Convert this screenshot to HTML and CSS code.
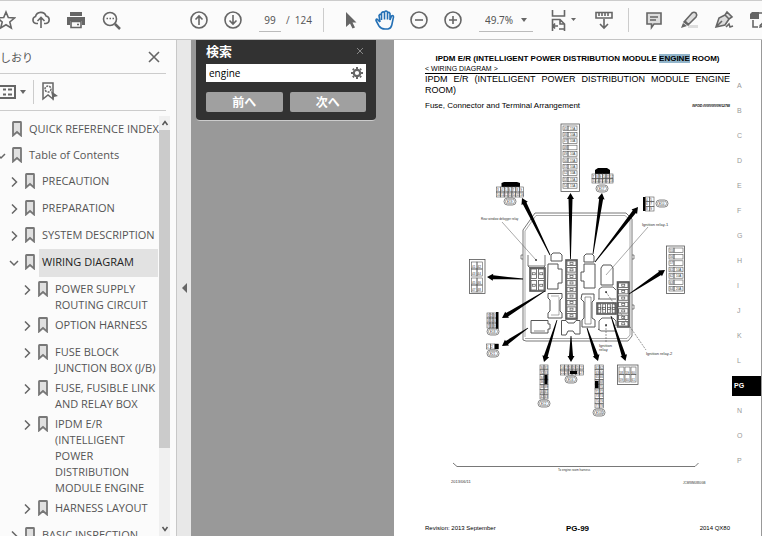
FILE: index.html
```
<!DOCTYPE html>
<html lang="ja">
<head>
    <meta charset="UTF-8">
    <meta name="viewport" content="width=device-width, initial-scale=1.0">
    <title>PG-99</title>
    <link rel="stylesheet" href="styles.css">
</head>
<body>
    <!-- shared symbols -->
    <svg class="symbols" aria-hidden="true">
        <symbol id="bookmark" viewBox="0 0 10 16"><path d="M1 1.5Q1 1 1.5 1H8.500Q9 1 9 1.500V14.500L5 11L1 14.500Z" fill="#e0e0e0" stroke="#777" stroke-width="1.800"/></symbol>
        <symbol id="right" viewBox="0 0 10 10"><path d="M3 0.500L7.500 5L3 9.500" fill="none" stroke="#666" stroke-width="1.500"/></symbol>
        <symbol id="down" viewBox="0 0 10 10"><path d="M1 3L5 7L9 3" fill="none" stroke="#666" stroke-width="1.500"/></symbol>
    </svg>

    <header class="toolbar">
        <div class="group first">
            <button aria-label="Star"><svg width="20" height="20" viewBox="0 0 20 20"><path d="M10 2L12.300 7.500L18.500 8L13.800 12L15.300 18L10 14.800L4.700 18L6.200 12L1.500 8L7.700 7.500Z"/></svg></button>
            <button aria-label="Upload"><svg width="20" height="20" viewBox="0 0 20 20"><path d="M7 13.500H5A3.600 3.600 0 0 1 4.500 6.500A5.500 5.500 0 0 1 15 6A3.800 3.800 0 0 1 15 13.500H13M10 18V8M6.500 11L10 7.500L13.500 11"/></svg></button>
            <button aria-label="Print"><svg width="20" height="20" viewBox="0 0 20 20"><path class="solid" d="M4 2H16V6H4ZM1 7H19V15H16V11H4V15H1Z"/><path d="M5 11.500H15V17.500H5ZM11 14.500H13"/></svg></button>
            <button aria-label="Find"><svg width="20" height="20" viewBox="0 0 20 20"><circle cx="9" cy="9" r="6.500"/><path d="M14 14L19 19" stroke-width="2.500"/><path d="M5.500 8.500H13" stroke-dasharray="1.500 1.500"/></svg></button>
        </div>
        <div class="group paging">
            <button aria-label="Previous page"><svg width="20" height="20" viewBox="0 0 20 20"><circle cx="10" cy="10" r="8"/><path d="M10 15V6M6.500 9.500L10 6L13.500 9.500"/></svg></button>
            <button aria-label="Next page"><svg width="20" height="20" viewBox="0 0 20 20"><circle cx="10" cy="10" r="8"/><path d="M10 5V14M6.500 10.500L10 14L13.500 10.500"/></svg></button>
        </div>
        <input class="page-no" aria-label="Page" value="99">
        <span class="page-count">/&nbsp; 124</span>
        <div class="group tools">
            <button aria-label="Select"><svg width="20" height="20" viewBox="0 0 20 20"><path class="solid" d="M5 2L15.500 12.500H11.500L14 17.500L11.500 18.500L9 13.500L5 17Z"/></svg></button>
            <button class="active" aria-label="Hand"><svg width="20" height="20" viewBox="0 0 20 20"><path d="M5 12L2.500 9.500Q1 8.500 1 10.500L4 16Q6 19 10 19H13Q16 18.500 16.800 15L18.500 7Q18.500 5 16.500 6L15 10V3.500Q14 1.500 12.500 3V9.500V2Q11 0 9.500 2V9.500V2.500Q8 1 6.500 3V10V5Q5 3.500 4 5.500L5 12"/></svg></button>
            <button aria-label="Zoom out"><svg width="20" height="20" viewBox="0 0 20 20"><circle cx="10" cy="10" r="8"/><path d="M6 10H14"/></svg></button>
            <button aria-label="Zoom in"><svg width="20" height="20" viewBox="0 0 20 20"><circle cx="10" cy="10" r="8"/><path d="M6 10H14M10 6V14"/></svg></button>
        </div>
        <div class="zoom">
            <select aria-label="Zoom"><option>49.7%</option></select>
            <svg class="caret" width="6" height="4" viewBox="0 0 6 4"><path d="M0 0H6L3 4Z"/></svg>
        </div>
        <div class="group fit">
            <button aria-label="Fit page"><svg width="26" height="22" viewBox="0 0 26 22"><path d="M1.500 1V7H13.500V1M1.500 22V10.500H9L13.500 15V22M9 10.500V15H13.500M7 17H2M4 14.500L2 17L4 19.500M8 20H13"/><path class="solid" d="M20 9H25L22.500 12Z"/></svg></button>
            <button aria-label="Measure"><svg width="20" height="20" viewBox="0 0 20 20"><path d="M2 2.500H18V8H2ZM5 3V6M8 3V6M11 3V6M14 3V6M10 9V18M6 14L10 18L14 14"/></svg></button>
        </div>
        <div class="group last">
            <button aria-label="Comment"><svg width="20" height="20" viewBox="0 0 20 20"><path class="tint" d="M3 3H17V14H10L7.500 17.500V14H3Z"/><path d="M6 7H14M6 10H12"/></svg></button>
            <button aria-label="Highlight"><svg width="20" height="20" viewBox="0 0 20 20"><path d="M9 16.500H19" stroke="#ddd" stroke-width="3"/><path class="tint" d="M5 12L13 3Q15 1.500 17 3Q18.500 5 17 7L9 15ZM6 11L10 15"/><path class="solid" d="M4 13L8 16L2 18Z"/></svg></button>
            <button aria-label="Sign"><svg width="20" height="20" viewBox="0 0 20 20"><path class="tint" d="M2 17L5 8L11 5L15 9L11 15ZM11 5L13 2L18 7L15 9M2 17L8 11"/><path d="M12 17L15 14L16 17L19 16"/></svg></button>
            <button aria-label="More"><svg width="20" height="20" viewBox="0 0 20 20"><path d="M4 10V17H9M6 3H14V8M11 16L17 9"/><path class="solid" d="M1 4L3 2H10V9H1ZM10 18L11 14L14 17Z"/></svg></button>
        </div>
    </header>

    <main class="viewer">
        <aside class="sidebar">
            <div class="side-title">
                <h2>しおり</h2>
                <button aria-label="Close"><svg width="12" height="12" viewBox="0 0 12 12"><path d="M1 1L11 11M11 1L1 11"/></svg></button>
            </div>
            <div class="side-tools">
                <button aria-label="Options"><svg width="26" height="16" viewBox="0 0 26 16"><path d="M0 2H15V14H0M3 5.500H6M3 10.500H6M8 5.500H12M8 10.500H12" stroke-width="2"/><path class="solid" d="M20 6H26L23 10Z"/></svg></button>
                <button class="find-mark" aria-label="Find bookmark"><svg width="17" height="20" viewBox="0 0 17 20"><path d="M1 1H11V17L6 13L1 17Z"/><circle cx="6" cy="7" r="3" stroke-dasharray="2 1"/><path class="solid" d="M9 9L16 14L12 15L11 19Z"/></svg></button>
            </div>
            <div class="tree-wrap">
                <ul class="tree">
                    <li><div class="row"><span class="tw"></span><svg class="bm"><use href="#bookmark"/></svg><a href="#">QUICK REFERENCE INDEX</a></div></li>
                    <li><div class="row"><svg class="tw"><use href="#down"/></svg><svg class="bm"><use href="#bookmark"/></svg><a href="#">Table of Contents</a></div>
                        <ul>
                            <li><div class="row"><svg class="tw"><use href="#right"/></svg><svg class="bm"><use href="#bookmark"/></svg><a href="#">PRECAUTION</a></div></li>
                            <li><div class="row"><svg class="tw"><use href="#right"/></svg><svg class="bm"><use href="#bookmark"/></svg><a href="#">PREPARATION</a></div></li>
                            <li><div class="row"><svg class="tw"><use href="#right"/></svg><svg class="bm"><use href="#bookmark"/></svg><a href="#">SYSTEM DESCRIPTION</a></div></li>
                            <li><div class="row"><svg class="tw"><use href="#down"/></svg><svg class="bm"><use href="#bookmark"/></svg><a class="current" href="#">WIRING DIAGRAM</a></div>
                                <ul>
                                    <li><div class="row"><svg class="tw"><use href="#right"/></svg><svg class="bm"><use href="#bookmark"/></svg><a href="#">POWER SUPPLY<br>ROUTING CIRCUIT</a></div></li>
                                    <li><div class="row"><svg class="tw"><use href="#right"/></svg><svg class="bm"><use href="#bookmark"/></svg><a href="#">OPTION HARNESS</a></div></li>
                                    <li><div class="row"><svg class="tw"><use href="#right"/></svg><svg class="bm"><use href="#bookmark"/></svg><a href="#">FUSE BLOCK<br>JUNCTION BOX (J/B)</a></div></li>
                                    <li><div class="row"><svg class="tw"><use href="#right"/></svg><svg class="bm"><use href="#bookmark"/></svg><a href="#">FUSE, FUSIBLE LINK<br>AND RELAY BOX</a></div></li>
                                    <li><div class="row"><svg class="tw"><use href="#right"/></svg><svg class="bm"><use href="#bookmark"/></svg><a href="#">IPDM E/R<br>(INTELLIGENT<br>POWER<br>DISTRIBUTION<br>MODULE ENGINE</a></div></li>
                                    <li><div class="row"><svg class="tw"><use href="#right"/></svg><svg class="bm"><use href="#bookmark"/></svg><a href="#">HARNESS LAYOUT</a></div></li>
                                </ul>
                            </li>
                            <li><div class="row"><svg class="tw"><use href="#right"/></svg><svg class="bm"><use href="#bookmark"/></svg><a href="#">BASIC INSPECTION</a></div></li>
                        </ul>
                    </li>
                </ul>
                <div class="scrollbar">
                    <button aria-label="Scroll up"><svg width="8" height="6" viewBox="0 0 8 6"><path d="M1.500 5L4 1.500L6.500 5"/></svg></button>
                    <div class="track"><div class="thumb"></div></div>
                    <button aria-label="Scroll down"><svg width="8" height="6" viewBox="0 0 8 6"><path d="M1.500 1L4 4.500L6.500 1"/></svg></button>
                </div>
            </div>
        </aside>
        <button class="splitter" aria-label="Hide panel"><svg width="5" height="10" viewBox="0 0 5 10"><path d="M5 0V10L0 5Z"/></svg></button>

        <section class="canvas">
            <form class="search">
                <div class="search-head">
                    <label for="q">検索</label>
                    <button type="button" class="close" aria-label="Close search"><svg width="8" height="8" viewBox="0 0 8 8"><path d="M1 1L7 7M7 1L1 7"/></svg></button>
                </div>
                <div class="search-box">
                    <input id="q" value="engine">
                    <svg width="12" height="12" viewBox="0 0 12 12"><circle cx="6" cy="6" r="3.200" fill="none" stroke="#666" stroke-width="2.200"/><path d="M6 0V2M6 10V12M0 6H2M10 6H12M1.800 1.800L3 3M9 9L10.200 10.200M1.800 10.200L3 9M9 3L10.200 1.800" stroke="#666" stroke-width="2"/></svg>
                </div>
                <div class="search-nav">
                    <button type="button">前へ</button>
                    <button type="button">次へ</button>
                </div>
            </form>

            <article class="page">
                <div class="content">
                    <h1>IPDM E/R (INTELLIGENT POWER DISTRIBUTION MODULE <mark>ENGINE</mark> ROOM)</h1>
                    <p class="section">&lt; WIRING DIAGRAM &gt;</p>
                    <h3>IPDM E/R (INTELLIGENT POWER DISTRIBUTION MODULE ENGINE ROOM)</h3>
                    <div class="sub"><h4>Fuse, Connector and Terminal Arrangement</h4><span>INFOID:0000000009012788</span></div>
                    <svg id="diagram" viewBox="425 115 305 375"></svg>
                    <footer><span>Revision: 2013 September</span><b>PG-99</b><span class="model">2014 QX80</span></footer>
                </div>
                <ol class="index">
                    <li>A</li><li>B</li><li>C</li><li>D</li><li>E</li><li>F</li><li>G</li><li>H</li>
                    <li>I</li><li>J</li><li>K</li><li>L</li><li class="on">PG</li><li>N</li><li>O</li><li>P</li>
                </ol>
            </article>
        </section>
    </main>
    <script src="diagram.js"></script>
</body>
</html>
```
FILE: styles.css
```
* {
    box-sizing: border-box;
}
body {
    display: flex;
    flex-direction: column;
    height: 100vh;
    margin: 0;
    overflow: hidden;
    background: #fbfbfb;
    color: #555;
    font-family: "Open Sans", "Noto Sans CJK JP", sans-serif;
    font-size: 12px;
}
button {
    display: flex;
    align-items: center;
    justify-content: center;
    padding: 0;
    border: 0;
    background: none;
    font-family: inherit;
}
svg {
    flex: none;
}
ul, ol {
    margin: 0;
    padding: 0;
    list-style: none;
}
h1, h2, h3, h4, p {
    margin: 0;
    font-weight: normal;
}
.symbols {
    display: none;
}

/* toolbar */
.toolbar {
    display: flex;
    flex: none;
    align-items: center;
    height: 40px;
    border-top: 1px solid #ccc;
    border-bottom: 1px solid #c4c4c4;
    overflow: hidden;
}
.toolbar > * {
    flex: none;
}
.group {
    display: flex;
}
.group button {
    width: 34px;
    height: 24px;
}
.group svg, .side-title svg, .side-tools svg {
    fill: none;
    stroke: #666;
    stroke-width: 1.6;
}
.group .solid, .side-tools .solid {
    fill: #666;
    stroke: none;
}
.group .tint {
    fill: #ddd;
}
.group .active svg {
    stroke: #2470b5;
}
.first {
    margin-left: -12px;
}
.first button, .last button {
    width: 35px;
}
.paging {
    margin-left: 54px;
}
.page-no {
    width: 22px;
    height: 24px;
    margin-left: 9px;
    padding: 0;
    border: 0;
    border-bottom: 1px solid #bbb;
    background: none;
    color: #555;
    font: 10px "Noto Sans", sans-serif;
    text-align: center;
}
.page-count {
    width: 37px;
    margin-left: 5px;
    font-size: 10px;
}
.tools {
    padding-left: 10px;
    border-left: 1px solid #ccc;
}
.zoom {
    display: flex;
    align-items: center;
    width: 54px;
    height: 24px;
    margin-left: 9px;
    border-bottom: 1px solid #bbb;
}
.zoom select {
    flex: 1;
    padding: 0 0 0 6px;
    border: 0;
    background: none;
    color: #555;
    font: 10px "Noto Sans", sans-serif;
    appearance: none;
}
.caret {
    margin-right: 6px;
    fill: #666;
}
.fit {
    gap: 6px;
    width: 82px;
    margin-left: 14px;
    border-right: 1px solid #ccc;
}
.last {
    margin-left: 7px;
}

/* bookmarks panel */
.viewer {
    display: flex;
    flex: 1;
    min-height: 0;
}
.sidebar {
    display: flex;
    flex: none;
    flex-direction: column;
    width: 177px;
    border-right: 1px solid #c8c8c8;
}
.side-title {
    display: flex;
    flex: none;
    align-items: center;
    justify-content: space-between;
    height: 34px;
    margin-right: 10px;
    padding-right: 6px;
    border-bottom: 1px solid #ccc;
}
.side-title h2 {
    font: 11px "Noto Sans CJK JP", sans-serif;
}
.side-tools {
    display: flex;
    flex: none;
    align-items: center;
    height: 37px;
    margin-right: 10px;
    border-bottom: 1px solid #ccc;
}
.side-tools svg {
    stroke-width: 1.5;
}
.find-mark {
    height: 24px;
    margin-left: 7px;
    padding-left: 8px;
    border-left: 1px solid #ccc;
}
.tree-wrap {
    display: flex;
    flex: 1;
    min-height: 0;
    padding: 5px 6px 0 0;
}
.tree {
    flex: 1;
    padding-top: 5px;
    overflow: hidden;
    white-space: nowrap;
}
.row {
    display: flex;
    min-height: 26px;
    margin-left: -4px;
    padding-bottom: 4px;
}
.tree ul {
    padding-left: 13px;
}
.tree ul .row {
    min-height: 27px;
}
.tw {
    flex: none;
    width: 10px;
    height: 10px;
    margin: 4px 6px 0 0;
}
.bm {
    width: 10px;
    height: 16px;
}
.row a {
    flex: 1;
    margin-left: 4px;
    padding-left: 3px;
    color: #555;
    font-size: 11px;
    line-height: 16px;
    text-decoration: none;
}
.row .current {
    margin: -5px 1px 0 4px;
    padding-top: 5px;
    background: #e2e2e2;
    color: #222;
}
.scrollbar {
    display: flex;
    flex: none;
    flex-direction: column;
    width: 11px;
    background: #f0f0f0;
}
.scrollbar button {
    height: 14px;
}
.scrollbar svg {
    fill: none;
    stroke: #555;
    stroke-width: 1.5;
}
.track {
    flex: 1;
}
.thumb {
    height: 81%;
    background: #cbcbcb;
}
.splitter {
    flex: none;
    width: 14px;
    background: #e8e8e8;
    fill: #666;
}

/* document */
.canvas {
    display: flex;
    flex: 1;
    align-items: flex-start;
    min-width: 0;
    padding: 0 1px 0 5px;
    background: #999;
}
.search {
    flex: none;
    width: 180px;
    margin-right: 18px;
    padding: 0 10px 8px;
    border-bottom: 1px solid #ccc;
    border-radius: 0 0 4px 4px;
    background: #323232;
    color: #fff;
}
.search-head {
    display: flex;
    align-items: center;
    justify-content: space-between;
    height: 24px;
    padding: 0 2px 3px 0;
    font-size: 13px;
    font-weight: bold;
}
.search-head svg {
    stroke: #888;
}
.search-box {
    display: flex;
    align-items: center;
    height: 18px;
    padding: 0 3px;
    background: #fff;
}
.search-box input {
    flex: 1;
    min-width: 0;
    padding: 0;
    border: 0;
    color: #000;
    font: 10px "Open Sans", sans-serif;
}
.search-nav {
    display: flex;
    gap: 7px;
    margin-top: 10px;
}
.search-nav button {
    flex: 1;
    height: 20px;
    border-radius: 2px;
    background: #a0a0a0;
    color: #fff;
    font-size: 12px;
    font-weight: bold;
}
.page {
    display: flex;
    flex: 1;
    min-width: 0;
    min-height: 100%;
    background: #fff;
    color: #000;
    font-family: "Liberation Sans", sans-serif;
}
.content {
    flex: 1;
    min-width: 0;
    padding: 13px 2px 0 31px;
}
h1 {
    font-size: 8px;
    font-weight: bold;
    line-height: 11px;
    text-align: center;
    white-space: nowrap;
}
mark {
    background: #92b5cb;
    color: inherit;
}
.section {
    border-bottom: 1px solid #000;
    font-size: 7px;
    line-height: 9px;
}
h3 {
    font-size: 9px;
    line-height: 11px;
    text-align: justify;
}
.sub {
    display: flex;
    align-items: center;
    justify-content: space-between;
    height: 19px;
}
h4 {
    font-size: 8px;
}
.sub span {
    font-size: 3px;
    font-style: italic;
    font-weight: bold;
}
#diagram {
    display: block;
    width: 100%;
    fill: none;
    stroke: #555;
}
#diagram text {
    fill: #333;
    stroke: none;
    font-size: 4px;
}
#diagram .num {
    font-size: 3px;
}
#diagram .black {
    fill: #000;
    stroke: none;
}
footer {
    display: grid;
    grid-template-columns: 1fr auto 1fr;
    margin-top: 32px;
    font-size: 6px;
    line-height: 13px;
}
footer b {
    font-size: 8px;
}
.model {
    text-align: right;
}
.index {
    flex: none;
    width: 29px;
    padding-top: 36px;
    color: #999;
    font-size: 7px;
}
.index li {
    height: 20px;
    margin-bottom: 5px;
    padding-left: 5px;
    line-height: 20px;
}
.index .on {
    padding-left: 2px;
    background: #000;
    color: #fff;
    font-weight: bold;
}
```
FILE: diagram.js
```
const parts = [];

function add(markup) {
    parts.push(markup);
}

function rect(x, y, w, h, width = 1) {
    add(`<rect x="${x}" y="${y}" width="${w}" height="${h}" stroke-width="${width}"/>`);
}

function black(x, y, w, h) {
    add(`<rect class="black" x="${x}" y="${y}" width="${w}" height="${h}"/>`);
}

function path(d, width = 1) {
    add(`<path d="${d}" stroke-width="${width}"/>`);
}

function text(x, y, value) {
    add(`<text x="${x}" y="${y}">${value}</text>`);
}

// connector face: numbered cells
function grid(x, y, w, h, cols, rows, start = 1) {
    const cw = w / cols;
    const ch = h / rows;
    for (let r = 0; r < rows; r++) {
        for (let c = 0; c < cols; c++) {
            rect(x + c * cw, y + r * ch, cw, ch, 0.6);
            add(`<text class="num" x="${x + c * cw + 0.6}" y="${y + (r + 1) * ch - 1}">${start + r * cols + c}</text>`);
        }
    }
}

// fuse list: number and rating
function fuses(x, y, pitch, rows) {
    rows.forEach(([no, amp], i) => {
        const top = y + i * pitch;
        rect(x, top, 5, 4.6, 0.6);
        rect(x + 5, top, 9, 4.6, 0.6);
        add(`<text class="num" x="${x + 0.8}" y="${top + 3.5}">${no}</text>`);
        add(`<text class="num" x="${x + 7}" y="${top + 3.5}">${amp}</text>`);
    });
}

// fuse sockets inside the box
function sockets(x, y, w, h, cols, rows) {
    rect(x, y, w, h, 1.6);
    const cw = w / cols;
    const ch = h / rows;
    for (let r = 0; r < rows; r++) {
        for (let c = 0; c < cols; c++) {
            rect(x + c * cw + 1, y + r * ch + 1, cw - 2, ch - 2, 0.8);
            rect(x + c * cw + cw / 2 - 1.5, y + r * ch + ch / 2 - 1, 3, 2, 0.7);
        }
    }
}

function oval(cx, cy, label) {
    add(`<rect x="${cx - 6}" y="${cy - 4}" width="12" height="7" rx="3.500" stroke-width="0.700"/>`);
    add(`<rect x="${cx - 4.5}" y="${cy - 2.7}" width="9" height="4.400" rx="2" stroke-width="0.500"/>`);
    add(`<text class="num" x="${cx - 3}" y="${cy + 0.7}">${label}</text>`);
}

function arrow(x1, y1, x2, y2) {
    const len = Math.hypot(x2 - x1, y2 - y1);
    const ux = (x2 - x1) / len;
    const uy = (y2 - y1) / len;
    const bx = x2 - ux * 6;
    const by = y2 - uy * 6;
    const p = (x, y, k) => `${x - uy * k} ${y + ux * k}`;
    add(`<path class="black" d="M${p(x1, y1, 0.4)}L${p(bx, by, 2)}L${p(bx, by, 3.5)}L${x2} ${y2}L${p(bx, by, -3.5)}L${p(bx, by, -2)}L${p(x1, y1, -0.4)}Z"/>`);
}

// box outline
path("M523 340V230L535 213H626L632 219V336L628 341H526Z", 0.8);
path("M525 337V231L536 215.500H625L630 220V335L627 338.500H525", 0.5);
path("M523 255H521V259H523M632 255H634V259H632M632 305H634V309H632", 0.7);

// fuse and connector views round the box
rect(561, 124, 18.5, 67.5, 0.8);
fuses(563, 126, 6.4, [[45, "15A"], [46, "10A"], [47, "10A"], [48, ""], [49, "10A"], [50, "15A"], [51, "10A"], [52, "10A"], [53, "15A"], [54, "15A"]]);
rect(666.5, 246, 18, 47.5, 0.8);
fuses(669, 248, 6.4, [[55, ""], [56, ""], [57, ""], [61, "10A"], [62, "10A"], [63, ""], [64, "20A"]]);
rect(469.5, 259.5, 15.5, 34, 0.8);
grid(471.5, 262, 11, 14, 2, 2, 41);
grid(471.5, 278, 11, 14, 2, 2, 45);
add('<path class="black" d="M501.500 187V183L504 182H517L520 183V187Z"/>');
grid(496.5, 187, 27, 10, 7, 2, 3);
oval(510, 202, "E19");
add('<path class="black" d="M595 174V170L598 168H607L610 170V174Z"/>');
grid(592, 174, 21, 9, 6, 2, 7);
oval(602, 189, "E17");
black(643, 197, 2.5, 14);
grid(645.5, 197, 8.5, 14, 2, 3, 4);
oval(662, 204, "E10");
grid(487, 313, 9, 15, 3, 3, 1);
black(496, 312, 2.5, 17);
oval(493, 332, "E18");
grid(486.5, 344, 12, 5, 3, 1, 1);
black(495, 344, 3.5, 5);
oval(493, 354, "E21");
grid(540, 365, 8, 34, 2, 7, 30);
black(544.5, 375, 3, 9);
oval(544, 404, "E12");
grid(560.5, 365, 23, 10, 6, 2, 16);
black(570, 371, 7, 3);
oval(571, 380, "E16");
grid(595, 365, 8.5, 43, 2, 9, 61);
black(595, 381, 3.5, 7);
oval(599, 413, "E105");
rect(617.5, 365, 20.5, 19.5, 0.8);
grid(619, 367, 5, 15, 1, 2, 58);
grid(625, 367, 5, 15, 1, 2, 59);
grid(631, 367, 5, 15, 1, 2, 60);

// relays and connectors in the box
path("M528 255V266H545V255M528 266L530 268H543L545 266", 0.8);
sockets(530, 268, 15, 23, 2, 2);
path("M551 261V255L553 253H560L562 255V261Z");
path("M548 264H558V269H562V283H558V289H547.500Z");
sockets(566, 260, 11, 59, 1, 9);
path("M584 262V256L586 254H592L594 256V262Z");
path("M584 264H595V288H584V281H581V272H584Z");
path("M601 268L603 265H611L613 268V285H601Z");
path("M599 299V289L602 287H613L616 290M598 299H616", 0.9);
sockets(597, 303, 19, 11, 4, 1);
sockets(617.5, 282, 11.5, 45, 1, 7);
path("M599 330V321L602 318H613L616 321V326M598 329L601 331H616", 0.9);
path("M548 293.500H562V298L560 300V311L562 313V318H548V313L550 311V300L548 298Z");
path("M551 296H559M551 315H559V297", 0.5);
path("M582 294H594V300L592 302V318L595 320V327H582V320L584 318V302L581 299Z");
path("M585 297H591V324H585Z", 0.6);
path("M531 320.500H548V324H550V329H548V333H531Z");
path("M534 331H545", 0.7);
path("M561.500 320.500H566L568 323H574L576 320.500H580V334H575L573 331H568L566 335H561.500Z");

path("M502 222L536 260M606 275L648 227", 0.5);
add('<path d="M606 292L646 350M606 325V343" stroke-width="0.600" stroke-dasharray="2 1"/>');
[[536, 260], [606, 292], [606, 325]].forEach(([x, y]) => black(x - 0.7, y - 0.7, 1.5, 1.5));

arrow(550, 255, 522, 198);
arrow(570.5, 259, 570.5, 193);
arrow(593, 254, 602, 193);
arrow(595, 262, 638, 207);
arrow(523, 279, 487, 277);
arrow(545, 291, 502, 318);
arrow(528, 328, 502, 346);
arrow(557, 320, 544, 362);
arrow(571, 336, 571, 362);
arrow(587, 328, 598, 361);
arrow(611, 316, 625.5, 361);
arrow(629, 294, 665, 270);

add('<text class="num" x="481" y="220">Rear window defogger relay</text>');
text(642, 226, "Ignition relay-1");
text(599, 347, "Ignition");
text(599, 351, "relay");
text(646, 355, "Ignition relay-2");

path("M453 463L457 466.500H695L698.500 463", 0.8);
add('<text class="num" x="558" y="471">To engine room harness</text>');
text(451, 483, "2013/06/11");
add('<text class="num" x="683" y="484">JCMWM0880GB</text>');

document.getElementById("diagram").innerHTML = parts.join("");
```
